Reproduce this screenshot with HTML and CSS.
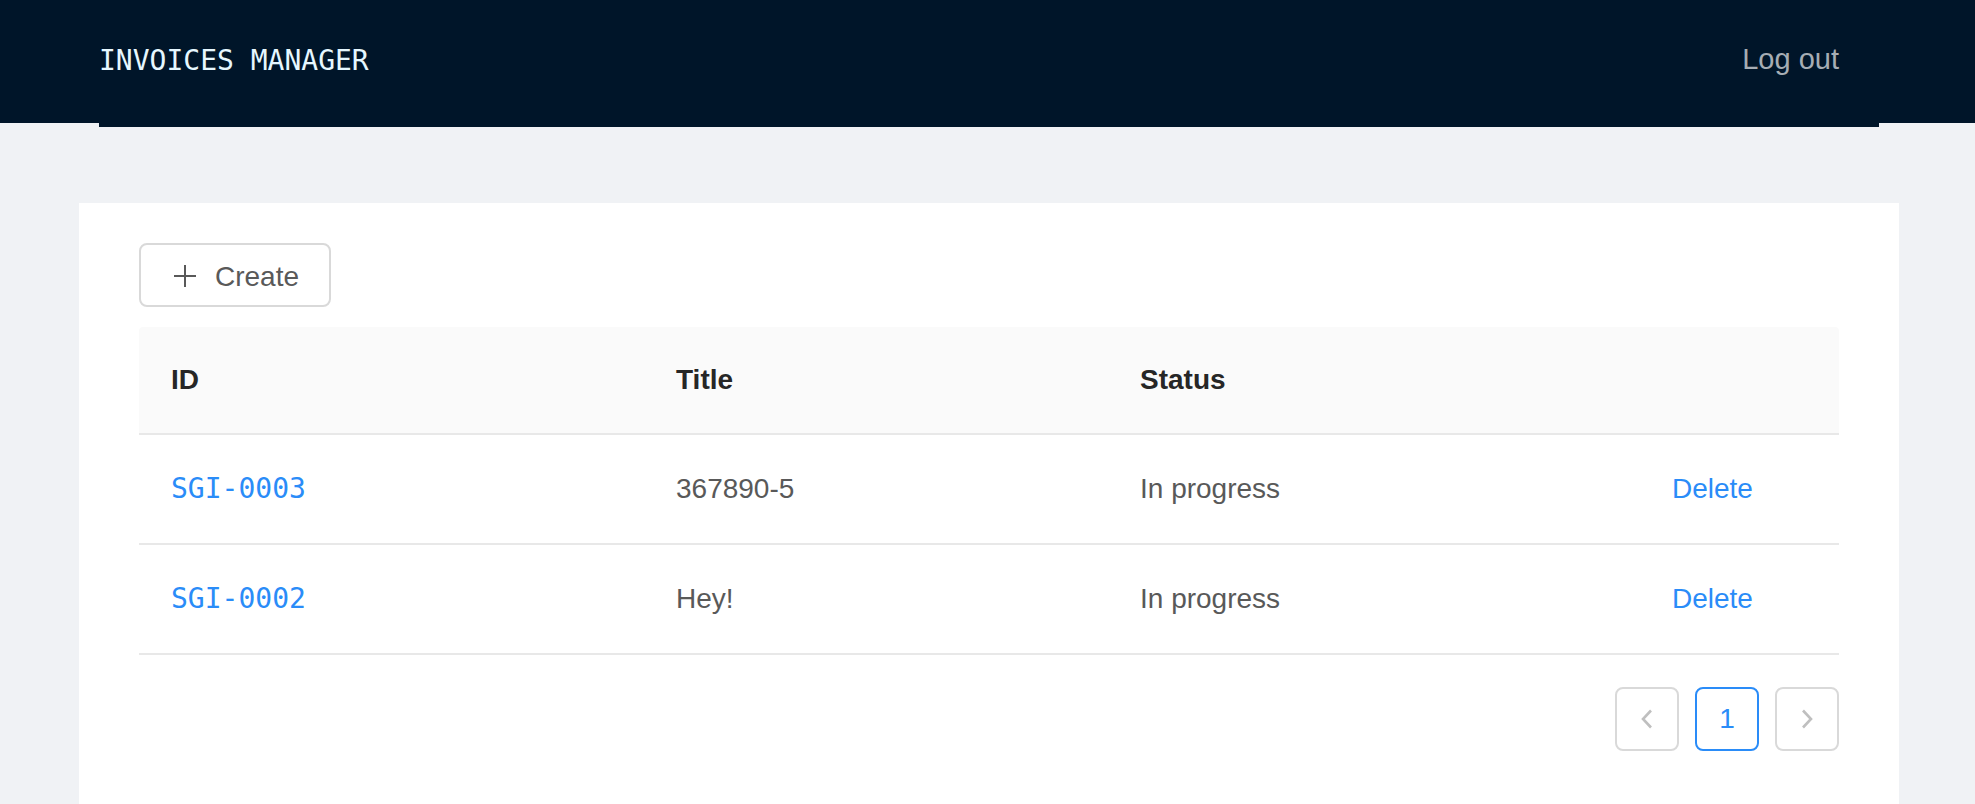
FILE: index.html
```html
<!DOCTYPE html>
<html lang="en">
<head>
<meta charset="utf-8">
<title>Invoices Manager</title>
<link rel="stylesheet" href="styles.css">
</head>
<body>
<header class="topbar">
  <div class="topbar-inner">
    <div class="brand">INVOICES MANAGER</div>
    <a class="logout" href="#">Log out</a>
  </div>
</header>
<main class="content">
  <section class="card">
    <button class="btn-create" type="button">
      <svg class="plus" width="28" height="28" viewBox="0 0 28 28" aria-hidden="true">
        <path d="M3 14H25M14 3V25" stroke="#595959" stroke-width="2" fill="none"/>
      </svg>
      <span class="btn-label">Create</span>
    </button>
    <table class="invoices">
      <colgroup>
        <col class="c-id">
        <col class="c-title">
        <col class="c-status">
        <col class="c-action">
      </colgroup>
      <thead>
        <tr><th>ID</th><th>Title</th><th>Status</th><th></th></tr>
      </thead>
      <tbody>
        <tr>
          <td><a class="id-link" href="#">SGI-0003</a></td>
          <td>367890-5</td>
          <td>In progress</td>
          <td><a class="action-link" href="#">Delete</a></td>
        </tr>
        <tr>
          <td><a class="id-link" href="#">SGI-0002</a></td>
          <td>Hey!</td>
          <td>In progress</td>
          <td><a class="action-link" href="#">Delete</a></td>
        </tr>
      </tbody>
    </table>
    <nav class="pagination">
      <span class="page-item disabled">
        <svg width="14" height="20" viewBox="0 0 14 20" aria-hidden="true"><path d="M11 1.5L3 10L11 18.5" stroke="#bfbfbf" stroke-width="2.6" fill="none"/></svg>
      </span>
      <span class="page-item active">1</span>
      <span class="page-item disabled">
        <svg width="14" height="20" viewBox="0 0 14 20" aria-hidden="true"><path d="M3 1.5L11 10L3 18.5" stroke="#bfbfbf" stroke-width="2.6" fill="none"/></svg>
      </span>
    </nav>
  </section>
</main>
</body>
</html>
```
FILE: styles.css
```css
html, body {
  margin: 0;
  padding: 0;
  background: #f0f2f5;
  font-family: "Liberation Sans", Arial, sans-serif;
}

.topbar {
  height: 123px;
  background: #001529;
}

.topbar-inner {
  height: 123px;
  margin: 0 96px 0 99px;
  background: #001529;
  border-bottom: 4px solid #001529;
  display: flex;
  align-items: center;
  justify-content: space-between;
}

.brand {
  font-family: "DejaVu Sans Mono", monospace;
  font-size: 28px;
  color: #e6f7ff;
  padding-bottom: 2px;
}

.logout {
  font-size: 29px;
  color: #a6adb4;
  text-decoration: none;
  padding: 0 40px 4px;
}

.card {
  background: #ffffff;
  margin: 80px 76px 0 79px;
  padding: 40px 60px 60px;
}

.btn-create {
  display: inline-flex;
  align-items: center;
  gap: 16px;
  height: 64px;
  box-sizing: border-box;
  padding: 0 30px;
  border: 2px solid #d9d9d9;
  border-radius: 8px;
  background: #ffffff;
  color: #595959;
  font-family: "Liberation Sans", Arial, sans-serif;
  font-size: 28px;
  cursor: pointer;
}

.btn-label {
  padding-top: 3px;
}

.plus {
  display: block;
  margin-top: 2px;
}

.invoices {
  width: 100%;
  margin-top: 20px;
  border-collapse: separate;
  border-spacing: 0;
  table-layout: fixed;
  font-size: 28px;
}

.c-id { width: 505px; }
.c-title { width: 464px; }
.c-status { width: 532px; }
.c-action { width: 199px; }

.invoices th {
  background: #fafafa;
  padding: 31px 32px;
  line-height: 44px;
  font-weight: 700;
  color: #262626;
  text-align: left;
  border-bottom: 2px solid #e8e8e8;
}

.invoices th:first-child { border-top-left-radius: 4px; }
.invoices th:last-child { border-top-right-radius: 4px; }

.invoices td {
  padding: 32px;
  line-height: 44px;
  color: #595959;
  border-bottom: 2px solid #e8e8e8;
}

.id-link {
  font-family: "DejaVu Sans Mono", monospace;
  color: #2a8cf8;
  text-decoration: none;
}

.action-link {
  color: #2a8cf8;
  text-decoration: none;
}

.pagination {
  display: flex;
  justify-content: flex-end;
  gap: 16px;
  margin-top: 32px;
}

.page-item {
  width: 64px;
  height: 64px;
  box-sizing: border-box;
  border: 2px solid #d9d9d9;
  border-radius: 8px;
  display: flex;
  align-items: center;
  justify-content: center;
  font-size: 28px;
  color: #595959;
  background: #ffffff;
}

.page-item.active {
  border-color: #2a8cf8;
  color: #2a8cf8;
}
```
